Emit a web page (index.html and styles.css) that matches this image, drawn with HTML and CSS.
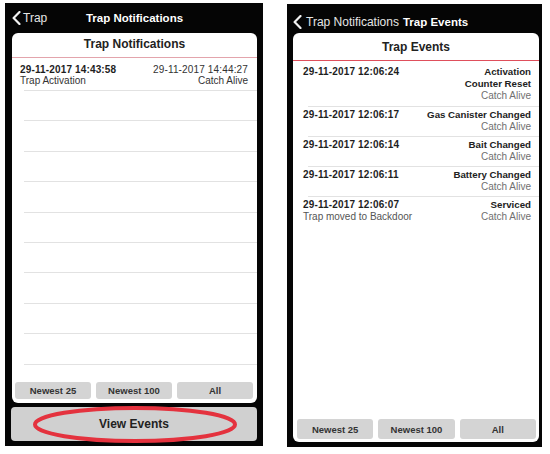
FILE: index.html
```html
<!DOCTYPE html>
<html>
<head>
<meta charset="utf-8">
<title>Trap Notifications</title>
<link rel="stylesheet" href="styles.css">
</head>
<body>
<div class="screens">
  <section class="phone phone-a">
    <header class="nav nav-a">
      <a class="back"><svg class="chev" viewBox="0 0 9 14"><polyline points="7.5,1 1.6,7 7.5,13" /></svg><span>Trap</span></a>
      <h1 class="nav-title">Trap Notifications</h1>
      <span></span>
    </header>
    <div class="card card-a">
      <h2 class="card-title title-a">Trap Notifications</h2>
      <div class="list list-a">
        <div class="row row-first">
          <div class="col-l"><span class="dt">29-11-2017 14:43:58</span><span class="sub">Trap Activation</span></div>
          <div class="col-r"><span class="dt2">29-11-2017 14:44:27</span><span class="sub">Catch Alive</span></div>
        </div>
        <div class="row row-empty"></div>
        <div class="row row-empty"></div>
        <div class="row row-empty"></div>
        <div class="row row-empty"></div>
        <div class="row row-empty"></div>
        <div class="row row-empty"></div>
        <div class="row row-empty"></div>
        <div class="row row-empty"></div>
        <div class="row row-empty"></div>
      </div>
      <div class="seg seg-a">
        <button>Newest 25</button><button>Newest 100</button><button>All</button>
      </div>
    </div>
    <div class="view-wrap">
      <button class="view-btn">View Events</button>
      <svg class="ring" width="208" height="41" viewBox="0 0 208 41"><ellipse cx="104" cy="20.5" rx="100" ry="16.5" /></svg>
    </div>
  </section>

  <section class="phone phone-b">
    <header class="nav nav-b">
      <a class="back"><svg class="chev" viewBox="0 0 9 14"><polyline points="7.5,1 1.6,7 7.5,13" /></svg><span>Trap Notifications</span></a>
      <h1 class="nav-title">Trap Events</h1>
    </header>
    <div class="card card-b">
      <h2 class="card-title title-b">Trap Events</h2>
      <div class="list list-b">
        <div class="row row-first">
          <div class="col-l"><span class="dt">29-11-2017 12:06:24</span></div>
          <div class="col-r"><span class="ev">Activation</span><span class="ev">Counter Reset</span><span class="alive">Catch Alive</span></div>
        </div>
        <div class="row">
          <div class="col-l"><span class="dt">29-11-2017 12:06:17</span></div>
          <div class="col-r"><span class="ev">Gas Canister Changed</span><span class="alive">Catch Alive</span></div>
        </div>
        <div class="row">
          <div class="col-l"><span class="dt">29-11-2017 12:06:14</span></div>
          <div class="col-r"><span class="ev">Bait Changed</span><span class="alive">Catch Alive</span></div>
        </div>
        <div class="row">
          <div class="col-l"><span class="dt">29-11-2017 12:06:11</span></div>
          <div class="col-r"><span class="ev">Battery Changed</span><span class="alive">Catch Alive</span></div>
        </div>
        <div class="row row-last">
          <div class="col-l"><span class="dt">29-11-2017 12:06:07</span><span class="note">Trap moved to Backdoor</span></div>
          <div class="col-r"><span class="ev">Serviced</span><span class="alive">Catch Alive</span></div>
        </div>
      </div>
      <div class="seg seg-b">
        <button>Newest 25</button><button>Newest 100</button><button>All</button>
      </div>
    </div>
  </section>
</div>
</body>
</html>
```

FILE: styles.css
```css
* {
  box-sizing: border-box;
  margin: 0;
  padding: 0;
}

body {
  background: #ffffff;
  font-family: "Liberation Sans", Arial, sans-serif;
  color: #222222;
}

.screens {
  display: flex;
  align-items: flex-start;
  gap: 24px;
  padding: 3px 0 0 5px;
}

.phone {
  background: #050505;
  display: flex;
  flex-direction: column;
  height: 443px;
}

.phone-a {
  width: 258px;
  padding: 0 6px 5px 7px;
}

.phone-b {
  width: 255px;
  margin-top: 1px;
  padding: 0 3px 5px 6px;
}

/* nav bar */
.nav {
  color: #ffffff;
  align-items: center;
}

.nav-a {
  height: 30px;
  display: grid;
  grid-template-columns: 1fr auto 1fr;
}

.nav-b {
  height: 29px;
  display: flex;
  gap: 4px;
  padding-top: 7px;
}

.back {
  display: flex;
  align-items: center;
  gap: 2px;
  color: #e6e6e6;
  font-size: 12px;
}

.nav-b .back {
  gap: 4px;
}

.chev {
  width: 9px;
  height: 14px;
}

.chev polyline {
  fill: none;
  stroke: #f2f2f2;
  stroke-width: 2.2;
  stroke-linecap: round;
  stroke-linejoin: round;
}

.nav-title {
  font-size: 11.5px;
  font-weight: bold;
  color: #ffffff;
}

/* card */
.card {
  background: #ffffff;
  border-radius: 6px;
  display: flex;
  flex-direction: column;
  overflow: hidden;
}

.card-a {
  height: 370px;
}

.card-b {
  flex: 1;
}

.card-title {
  font-size: 12px;
  font-weight: bold;
  text-align: center;
  color: #222222;
}

.title-a {
  height: 24.5px;
  line-height: 23px;
  border-bottom: 1.5px solid #e3a4ac;
}

.title-b {
  height: 27.5px;
  padding-top: 1px;
  line-height: 26px;
  border-bottom: 1.5px solid #df4f5c;
}

/* list rows */
.row {
  display: flex;
  justify-content: space-between;
  border-bottom: 1px solid #e2e2e2;
  font-size: 10px;
}

.col-l,
.col-r {
  display: flex;
  flex-direction: column;
}

.col-r {
  text-align: right;
  align-items: flex-end;
}

.dt {
  font-weight: bold;
  color: #1e1e1e;
  letter-spacing: 0.15px;
}

.dt2 {
  color: #333333;
  letter-spacing: 0.15px;
}

.sub {
  color: #333333;
}

.ev {
  font-weight: bold;
  color: #222222;
  font-size: 9.7px;
}

.alive {
  color: #707070;
}

.note {
  color: #555555;
}

.list-a {
  padding-left: 12px;
}

.list-a .row {
  line-height: 11px;
  padding-right: 9px;
}

.list-a .col-l {
  margin-left: -4px;
}

.list-a .row-first {
  padding-top: 6.5px;
  padding-bottom: 4px;
}

.row-empty {
  height: 30.4px;
}

.list-b {
  padding-left: 15px;
}

.list-b .row {
  line-height: 12px;
  padding: 2.5px 8px 2.5px 0;
}

.list-b .col-l {
  margin-left: -5px;
}

.list-b .row-first {
  padding-top: 5.5px;
  padding-bottom: 3.5px;
}

.list-b .row-last {
  border-bottom: 0;
}

/* segmented buttons */
.seg {
  margin-top: auto;
  display: grid;
  grid-template-columns: repeat(3, 1fr);
  gap: 5px;
}

.seg button {
  font-family: "Liberation Sans", Arial, sans-serif;
  font-weight: bold;
  font-size: 9.5px;
  color: #333333;
  background: #d4d4d4;
  border: 0;
  border-radius: 3px;
}

.seg-a {
  padding: 0 4px 4px 3px;
}

.seg-a button {
  height: 17px;
}

.seg-b {
  padding: 0 3px 3px 4px;
}

.seg-b button {
  height: 20px;
}

/* view events */
.view-wrap {
  position: relative;
  margin-top: 4px;
  margin-left: -1px;
  height: 34px;
}

.view-btn {
  width: 100%;
  height: 34px;
  border: 0;
  border-radius: 4px;
  background: #d0d0d0;
  font-family: "Liberation Sans", Arial, sans-serif;
  font-weight: bold;
  font-size: 12px;
  color: #222222;
}

.ring {
  position: absolute;
  left: 20px;
  top: -3px;
  overflow: visible;
  pointer-events: none;
}

.ring ellipse {
  fill: none;
  stroke: #e4323e;
  stroke-width: 4;
}
```
